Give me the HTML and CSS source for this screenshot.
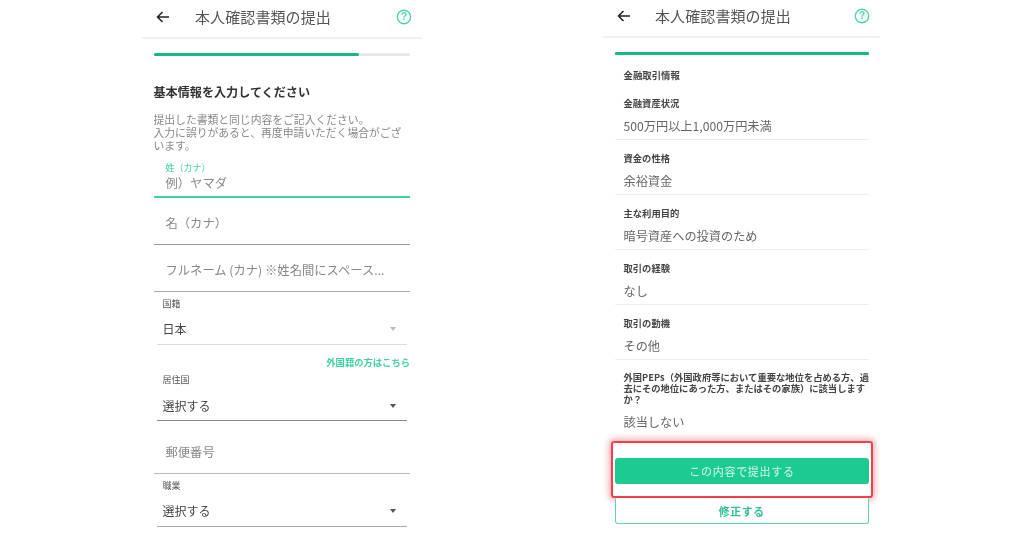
FILE: index.html
```html
<!DOCTYPE html>
<html lang="ja">
<head>
<meta charset="utf-8">
<title>本人確認書類の提出</title>
<link rel="stylesheet" href="styles.css">
</head>
<body>
<main class="page">
  <section class="phone phone-left">
    <header class="top">
      <svg class="back" viewBox="0 0 14 12"><path d="M13 6H1.5M6.5 1 1.5 6l5 5" fill="none" stroke="#222" stroke-width="1.5"/></svg>
      <h1 class="title">本人確認書類の提出</h1>
      <svg class="help" viewBox="0 0 16 16"><circle cx="8" cy="8" r="6.7" fill="none" stroke="#4fd6ae" stroke-width="1.4"/><text x="8" y="11.2" text-anchor="middle" class="help-q">?</text></svg>
    </header>
    <div class="form">
      <div class="bar"><div class="bar-fill"></div></div>
      <h2 class="heading">基本情報を入力してください</h2>
      <p class="desc">提出した書類と同じ内容をご記入ください。<br>入力に誤りがあると、再度申請いただく場合がございます。</p>
      <div class="field field-active"><span class="float">姓（カナ）</span><span class="ph ph-active">例）ヤマダ</span></div>
      <div class="field field-name"><span class="ph">名（カナ）</span></div>
      <div class="field field-full"><span class="ph">フルネーム (カナ) ※姓名間にスペース...</span></div>
      <div class="select select-nat">
        <span class="sel-label">国籍</span>
        <div class="sel-row"><span class="sel-val">日本</span><i class="caret caret-off"></i></div>
      </div>
      <a class="link">外国籍の方はこちら</a>
      <div class="select select-res">
        <span class="sel-label">居住国</span>
        <div class="sel-row"><span class="sel-val">選択する</span><i class="caret"></i></div>
      </div>
      <div class="field field-zip"><span class="ph">郵便番号</span></div>
      <div class="select select-job">
        <span class="sel-label">職業</span>
        <div class="sel-row"><span class="sel-val">選択する</span><i class="caret"></i></div>
      </div>
    </div>
  </section>

  <section class="phone phone-right">
    <header class="top">
      <svg class="back" viewBox="0 0 14 12"><path d="M13 6H1.5M6.5 1 1.5 6l5 5" fill="none" stroke="#222" stroke-width="1.5"/></svg>
      <h1 class="title">本人確認書類の提出</h1>
      <svg class="help" viewBox="0 0 16 16"><circle cx="8" cy="8" r="6.7" fill="none" stroke="#4fd6ae" stroke-width="1.4"/><text x="8" y="11.2" text-anchor="middle" class="help-q">?</text></svg>
    </header>
    <div class="review">
      <div class="bar bar-full"><div class="bar-fill bar-fill-full"></div></div>
      <h2 class="section">金融取引情報</h2>
      <div class="item"><h3 class="item-label">金融資産状況</h3><p class="item-val">500万円以上1,000万円未満</p></div>
      <div class="item"><h3 class="item-label">資金の性格</h3><p class="item-val">余裕資金</p></div>
      <div class="item"><h3 class="item-label">主な利用目的</h3><p class="item-val">暗号資産への投資のため</p></div>
      <div class="item"><h3 class="item-label">取引の経験</h3><p class="item-val">なし</p></div>
      <div class="item"><h3 class="item-label">取引の動機</h3><p class="item-val">その他</p></div>
      <div class="item item-last"><h3 class="item-label item-long">外国PEPs（外国政府等において重要な地位を占める方、過去にその地位にあった方、またはその家族）に該当しますか？</h3><p class="item-val">該当しない</p></div>
      <div class="highlight"><button class="btn-primary">この内容で提出する</button></div>
      <button class="btn-outline">修正する</button>
    </div>
  </section>
</main>
</body>
</html>
```

FILE: styles.css
```css
* { box-sizing: border-box; }
html, body { margin: 0; height: 538px; overflow: hidden; background: #fff; }
body { font-family: "Noto Sans CJK JP", "Noto Sans", sans-serif; color: #444; }
.page { display: flex; padding-left: 142px; height: 538px; }
.phone { height: 538px; overflow: hidden; filter: blur(.35px); }
.phone-left { width: 280px; }
.phone-right { width: 277px; margin-left: 181px; }

.top { display: flex; align-items: center; height: 39px; border-bottom: 2px solid #f0f0f0; padding: 0 10px 4px 14px; }
.phone-right .top { height: 38px; }
.back { width: 14px; height: 12px; flex: none; }
.title { margin: 0 0 0 25px; flex: 1; font-size: 15px; font-weight: 400; line-height: 20px; color: #555; letter-spacing: .1px; white-space: nowrap; }
.phone-right .title { margin-left: 24px; }
.help { width: 16px; height: 16px; flex: none; }
.help-q { font: 700 10px "Liberation Sans", sans-serif; fill: #4fd6ae; }

.form { padding: 14px 12px 0 11.5px; }
.bar { height: 3px; background: #e8e8e8; border-radius: 2px; }
.bar-fill { width: 205px; height: 3px; background: #16b88a; border-radius: 2px; }
.bar-fill-full { width: 100%; }
.heading { margin: 27px 0 0; font-size: 12.1px; line-height: 18px; font-weight: 700; color: #333; }
.desc { margin: 12px 0 0; font-size: 10.8px; line-height: 13px; color: #888; }

.field { border-bottom: 1px solid #999; padding-left: 12px; }
.ph { display: block; font-size: 12.3px; line-height: 18px; color: #888; white-space: nowrap; }
.field-active { margin-top: 10px; height: 36px; border-bottom: 2px solid #3fd0a4; }
.float { display: block; font-size: 9px; line-height: 11px; color: #3fd0a4; }
.ph-active { margin-top: 1px; }
.field-name { height: 47px; padding-top: 16px; }
.field-full { height: 47px; padding-top: 16px; border-bottom-color: #aaa; }
.field-zip { height: 53px; padding-top: 22px; border-bottom-color: #bbb; }

.select { margin: 0 3px; border-bottom: 1px solid #999; }
.sel-label { display: block; padding-left: 6px; font-size: 9px; line-height: 12px; color: #555; }
.sel-row { display: flex; align-items: center; justify-content: space-between; padding: 0 11px 0 6px; }
.sel-val { font-size: 12px; line-height: 18px; color: #444; }
.caret { width: 0; height: 0; border: 3.5px solid transparent; border-top: 4px solid #555; border-bottom: 0; }
.caret-off { border-top-color: #bbb; }
.select-nat { margin-top: 6px; height: 47px; border-bottom-color: #ddd; }
.select-nat .sel-row { margin-top: 10px; }
.link { display: block; margin-top: 10px; text-align: right; font-size: 9.3px; line-height: 14px; font-weight: 700; color: #3fd0a4; }
.select-res { margin-top: 5px; height: 47px; border-bottom-color: #888; }
.select-res .sel-row { margin-top: 11px; }
.select-job { margin-top: 6px; height: 47px; border-bottom-color: #aaa; }
.select-job .sel-row { margin-top: 10px; }

.review { padding: 14px 11px 0 11.5px; }
.bar-full { background: #16b88a; }
.section { margin: 14px 0 4px; padding-left: 9px; font-size: 9.4px; line-height: 12px; font-weight: 700; color: #444; }
.item { border-bottom: 1px solid #eee; height: 55px; padding-top: 12px; }
.item-label { margin: 0; padding-left: 9px; font-size: 9.3px; line-height: 13px; font-weight: 700; color: #444; }
.item-val { margin: 7px 0 0; padding-left: 9px; font-size: 12.2px; line-height: 18px; color: #666; white-space: nowrap; }
.item-last { border: 0; height: auto; }
.item-long { line-height: 11px; }
.item-last .item-val { margin-top: 8px; }
.highlight { display: flex; margin: 10px -4px 0 -3.5px; height: 57px; padding: 15px 2px 0 2px; border: 2px solid #f0404c; border-radius: 3px; box-shadow: 0 0 6px 2px rgba(240, 64, 76, .45); }
.btn-primary { width: 100%; height: 26px; border: 0; border-radius: 3px; background: #1ccb92; color: #d8f5ea; font: 400 11px/26px "Noto Sans CJK JP", sans-serif; letter-spacing: .7px; padding: 0; }
.btn-outline { display: block; width: 100%; height: 26px; border: 1px solid #5ed3b0; border-top-color: transparent; border-radius: 0 0 3px 3px; background: #fff; color: #2fbf93; font: 700 10.8px/24px "Noto Sans CJK JP", sans-serif; letter-spacing: .7px; padding: 0; }
```
